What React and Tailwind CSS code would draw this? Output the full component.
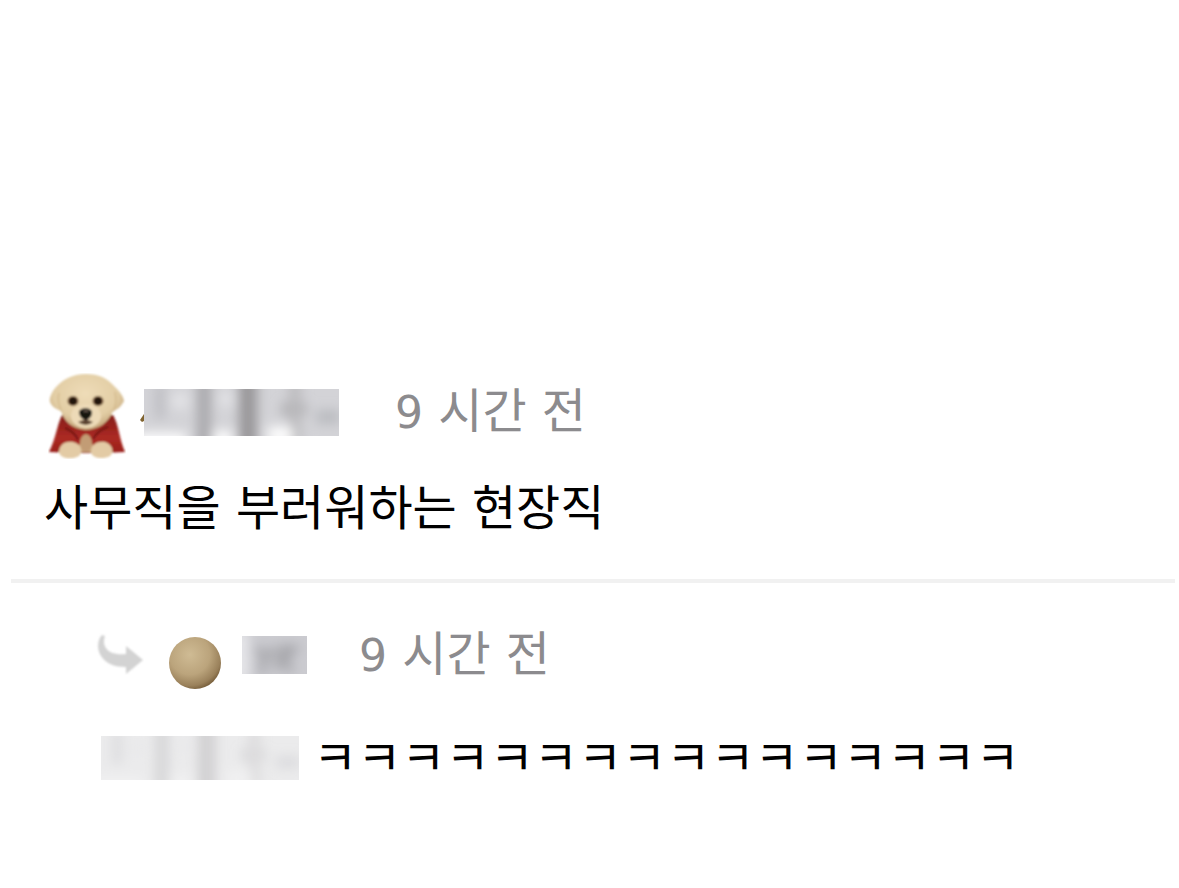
const KIEUK = 'ㅋㅋㅋㅋㅋㅋㅋㅋㅋㅋㅋㅋㅋㅋㅋㅋ';

function PuppyIcon() {
  return (
    <svg viewBox="0 0 78 86" className="h-[86px] w-[78px] shrink-0" role="img" aria-label="강아지">
      <defs>
        <radialGradient id="fur" cx="0.48" cy="0.35" r="0.62">
          <stop offset="0" stopColor="#eedcb8" />
          <stop offset="0.7" stopColor="#e2cda4" />
          <stop offset="1" stopColor="#c5a77c" />
        </radialGradient>
        <linearGradient id="cape" x1="0" y1="0" x2="0" y2="1">
          <stop offset="0" stopColor="#851d18" />
          <stop offset="0.6" stopColor="#ac2a23" />
          <stop offset="1" stopColor="#981e18" />
        </linearGradient>
        <filter id="soft" x="-10%" y="-10%" width="120%" height="120%">
          <feGaussianBlur stdDeviation="1" />
        </filter>
      </defs>
      <g filter="url(#soft)">
        <path d="M14 42 C9 52 8 65 1 79 L27 80 L54 80 L77 79 C71 65 71 52 65 42 Z" fill="url(#cape)" />
        <path d="M38 66 L22 79 L54 79 Z" fill="#cba980" />
        <path d="M38 1 C24 1 15 7 9 13 C3 19 1 26 2 29 C4 34 8 36 13 38 C16 48 24 56 37 57 C51 57 61 49 65 38 C70 37 74 32 76 28 C75 22 71 18 66 13 C59 5 51 1 38 1 Z" fill="url(#fur)" />
        <path d="M11 20 C9 27 11 33 14 39 M67 19 C69 27 68 33 65 39" fill="none" stroke="#c9ac7c" strokeWidth="1.5" opacity="0.5" />
        <ellipse cx="38" cy="43" rx="15" ry="12" fill="#eddab7" />
        <ellipse cx="25" cy="28" rx="5.5" ry="5" fill="#795334" />
        <ellipse cx="50" cy="28" rx="5.5" ry="5" fill="#795334" />
        <circle cx="25" cy="28" r="4" fill="#211610" />
        <circle cx="50" cy="28" r="4" fill="#211610" />
        <path d="M31 39 C32 34 43 34 44 39 C44 44 41 46 39 47 L39 50 L37 50 L37 47 C34 46 31 43 31 39 Z" fill="#19130f" />
        <path d="M30 49 Q38 45 45 49 Q38 55 30 49" fill="#59402d" />
        <ellipse cx="38" cy="38" rx="3" ry="1" fill="#66594f" />
        <path d="M17 55 Q27 59 30 67 M60 54 Q50 57 45 66" fill="none" stroke="#721713" strokeWidth="2" />
        <ellipse cx="38" cy="70" rx="6" ry="9" fill="#c29c74" />
        <path d="M11 79 C11 71 18 68 25 69 C32 70 36 78 31 83 C24 87 12 86 11 79 Z" fill="#e3cba5" />
        <path d="M43 79 C43 71 50 68 57 69 C64 71 67 79 62 83 C55 87 43 85 43 79 Z" fill="#e3cba5" />
      </g>
    </svg>
  );
}

function HiddenName({ id, className, viewBox, base, children }) {
  return (
    <svg className={className} viewBox={viewBox} preserveAspectRatio="none" aria-hidden="true">
      <defs>
        <filter id={id} x="-30%" y="-30%" width="160%" height="160%">
          <feGaussianBlur stdDeviation="6" />
        </filter>
      </defs>
      <rect width="100%" height="100%" fill={base} />
      <g filter={`url(#${id})`}>{children}</g>
    </svg>
  );
}

function LongNameShades() {
  return (
    <>
      <path d="M16 -6 V30" stroke="#bdbdc2" strokeWidth="10" fill="none" />
      <path d="M60 -12 V60" stroke="#a9a8ac" strokeWidth="14" />
      <path d="M104 -14 V62" stroke="#989699" strokeWidth="18" />
      <path d="M138 20 H162" stroke="#a9a8ab" strokeWidth="12" />
      <path d="M151 -10 V55" stroke="#bcbbbe" strokeWidth="12" />
      <path d="M172 28 H196" stroke="#babbc0" strokeWidth="14" fill="none" />
      <path d="M-8 52 H42 M70 50 H88 M124 46 H148" stroke="#ffffff" strokeWidth="16" />
      <path d="M28 12 H44 M76 10 H88" stroke="#e4e4e7" strokeWidth="14" />
    </>
  );
}

function ReplyArrow() {
  return (
    <svg viewBox="0 0 48 44" className="h-11 w-12 shrink-0" aria-hidden="true">
      <defs>
        <filter id="arrowSoft" x="-10%" y="-10%" width="120%" height="120%">
          <feGaussianBlur stdDeviation="0.8" />
        </filter>
      </defs>
      <path d="M6 2 C1 7 1 17 5 23 C10 31 19 34 30 34 V41 L47 27 L30 13 V21 C20 22 13 20 10 15 C7 11 8 6 9 3 Z" fill="#d3d3d3" filter="url(#arrowSoft)" />
    </svg>
  );
}

function BallIcon() {
  return (
    <svg viewBox="0 0 54 54" className="h-[54px] w-[54px] shrink-0" aria-hidden="true">
      <defs>
        <radialGradient id="ball" cx="0.4" cy="0.34" r="0.7">
          <stop offset="0" stopColor="#cfbb94" />
          <stop offset="0.55" stopColor="#bba47c" />
          <stop offset="0.85" stopColor="#9a815b" />
          <stop offset="1" stopColor="#745b38" />
        </radialGradient>
      </defs>
      <circle cx="27" cy="27" r="26" fill="url(#ball)" />
    </svg>
  );
}

function PostedTime({ className }) {
  return (
    <time className={className}>
      <span className="text-[44px]">9</span> 시간 전
    </time>
  );
}

export default function App() {
  return (
    <main className="min-h-screen bg-white pt-[372px] pr-1 pb-20 pl-[11px] font-['DejaVu_Sans','Noto_Sans_CJK_KR',sans-serif] text-5xl text-black">
      <article className="pl-[33px]">
        <header className="flex h-[88px] items-center pl-1">
          <PuppyIcon />
          <div className="flex items-center pb-2 pl-[13px]">
            <svg viewBox="0 0 5 10" className="mt-3 h-[10px] w-[5px]" aria-hidden="true">
              <path d="M5 1 L1 7 L3 9 L5 8 Z" fill="#80632f" />
            </svg>
            <HiddenName id="nameBlur" className="h-[47px] w-[195px]" viewBox="0 0 195 47" base="#d3d3d7">
              <LongNameShades />
            </HiddenName>
            <PostedTime className="pl-14 leading-[72px] text-[#8c8b8e]" />
          </div>
        </header>
        <p className="mt-3 leading-[72px]">사무직을 부러워하는 현장직</p>
      </article>
      <hr className="mt-[35px] border-t-4 border-[#f1f1f1]" />
      <article className="pt-9 pl-[85px]">
        <header className="flex h-[72px] items-center">
          <ReplyArrow />
          <div className="pt-4 pl-6">
            <BallIcon />
          </div>
          <HiddenName id="replyBlur" className="ml-5 h-[38px] w-[65px]" viewBox="0 0 65 38" base="#cbcbd0">
            <path d="M14 12 L24 21 L34 12 M23 21 L19 38 M34 34 L42 12 L52 13 L42 23 L50 36" fill="none" stroke="#a6a6aa" strokeWidth="7" />
            <path d="M0 -5 V45" stroke="#ececef" strokeWidth="12" />
          </HiddenName>
          <PostedTime className="pl-[52px] leading-[72px] text-[#8c8b8e]" />
        </header>
        <p className="mt-[31px] flex items-center pl-[5px] leading-[72px]">
          <HiddenName id="mentionBlur" className="mr-[14px] h-11 w-[198px] shrink-0" viewBox="0 0 195 47" base="#ebebec">
            <g opacity="0.3">
              <LongNameShades />
            </g>
          </HiddenName>
          <span>{KIEUK}</span>
        </p>
      </article>
    </main>
  );
}
